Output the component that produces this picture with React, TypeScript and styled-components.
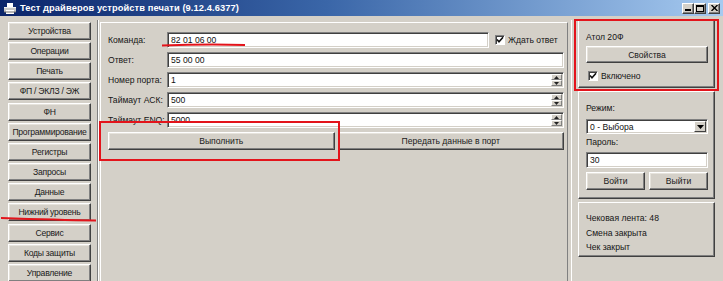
import React from "react";
import styled, { createGlobalStyle } from "styled-components";

const Global = createGlobalStyle`
  html, body { margin: 0; padding: 0; background: #d4d0c8; }
  body {
    font-family: "Liberation Sans", Arial, sans-serif;
    font-size: 8.6px;
    color: #151515;
  }
`;

const Window = styled.div`
  position: relative;
  width: 723px;
  height: 281px;
  overflow: hidden;
  display: flex;
  flex-direction: column;
  background: #d4d0c8;
`;

const TitleBar = styled.div`
  height: 16px;
  flex: none;
  display: flex;
  align-items: center;
  padding: 0 3px 0 3px;
  background: linear-gradient(90deg, #0a246a 0%, #3a66a8 45%, #a6caf0 100%);
`;

const TitleText = styled.div`
  margin-left: 3px;
  color: #fff;
  font-weight: bold;
  font-size: 9.3px;
  letter-spacing: 0.1px;
  flex: 1;
  white-space: nowrap;
`;

const WinButtons = styled.div`
  display: flex;
`;

const WinButton = styled.div<{ $gapLeft?: number }>`
  width: 12px;
  height: 11px;
  margin-left: ${(p) => p.$gapLeft ?? 0}px;
  box-sizing: border-box;
  background: #d4d0c8;
  border: 1px solid;
  border-color: #fff #404040 #404040 #fff;
  box-shadow: inset -1px -1px #808080;
  display: flex;
  align-items: center;
  justify-content: center;
`;

const Body = styled.div`
  flex: 1;
  display: flex;
  padding-top: 6px;
  min-height: 0;
`;

const LeftCol = styled.div`
  width: 83px;
  flex: none;
  padding-left: 8px;
  padding-right: 6px;
  display: flex;
  flex-direction: column;
  gap: 2.17px;
  letter-spacing: -0.25px;
`;

const Separator = styled.div`
  width: 1px;
  flex: none;
  background: #808080;
  border-right: 1px solid #fff;
  margin-right: 1px;
  margin-top: -2px;
`;

const RaisedButton = styled.div<{ $h?: number; $grow?: boolean }>`
  box-sizing: border-box;
  height: ${(p) => p.$h ?? 18}px;
  flex: ${(p) => (p.$grow ? "1 1 0" : "none")};
  display: flex;
  align-items: center;
  justify-content: center;
  background: #d4d0c8;
  border: 1px solid;
  border-color: #fff #404040 #404040 #fff;
  box-shadow: inset -1px -1px #808080, inset 1px 1px #e6e3dc;
  white-space: nowrap;
  overflow: hidden;
  color: #1a1a1a;
`;

const MiddlePanel = styled.div`
  width: 468px;
  flex: none;
  box-sizing: border-box;
  border: 1px solid;
  border-color: #fff #808080 #808080 #fff;
  border-bottom: none;
  padding: 9px 3px 0 7px;
  display: flex;
  flex-direction: column;
  gap: 4px;
`;

const Row = styled.div`
  height: 16px;
  display: flex;
  align-items: center;
`;

const FieldLabel = styled.div`
  width: 59px;
  flex: none;
  white-space: nowrap;
`;

const Field = styled.div<{ $h?: number }>`
  box-sizing: border-box;
  flex: 1;
  min-width: 0;
  height: ${(p) => p.$h ?? 16}px;
  background: #fff;
  border: 1px solid;
  border-color: #808080 #fff #fff #808080;
  box-shadow: inset 1px 1px #404040, inset -1px -1px #d4d0c8;
  display: flex;
  align-items: center;
  padding-left: 3px;
  white-space: nowrap;
  color: #111;
`;

const FieldText = styled.div`
  flex: 1;
`;

const Spinner = styled.div`
  width: 11px;
  height: 12px;
  margin-right: 1px;
  display: flex;
  flex-direction: column;
`;

const SpinHalf = styled.div`
  flex: 1;
  box-sizing: border-box;
  background: #d4d0c8;
  border: 1px solid;
  border-color: #fff #808080 #808080 #fff;
  display: flex;
  align-items: center;
  justify-content: center;
`;

const CheckWrap = styled.div`
  width: 75px;
  flex: none;
  box-sizing: border-box;
  padding-left: 6px;
  display: flex;
  align-items: center;
  gap: 3px;
  white-space: nowrap;
`;

const CheckBox = styled.div`
  width: 10px;
  height: 10px;
  box-sizing: border-box;
  flex: none;
  background: #fff;
  border: 1px solid;
  border-color: #808080 #fff #fff #808080;
  box-shadow: inset 1px 1px #404040;
  display: flex;
  align-items: center;
  justify-content: center;
`;

const ButtonRow = styled.div`
  display: flex;
  gap: 3px;
`;

const RightPanel = styled.div`
  flex: 1;
  box-sizing: border-box;
  margin-left: 3px;
  border-left: 1px solid #fff;
  padding: 0 8px 0 6px;
  margin-top: -2px;
  display: flex;
  flex-direction: column;
  gap: 3px;
`;

const Group = styled.div<{ $h: number; $pt: number }>`
  box-sizing: border-box;
  height: ${(p) => p.$h}px;
  flex: none;
  border: 1px solid;
  border-color: #fff #404040 #404040 #fff;
  box-shadow: inset -1px -1px #808080;
  padding: ${(p) => p.$pt}px 6px 0 7px;
  display: flex;
  flex-direction: column;
`;

const GroupText = styled.div<{ $mt?: number; $lh?: number }>`
  line-height: ${(p) => p.$lh ?? 12}px;
  margin-top: ${(p) => p.$mt ?? 0}px;
  white-space: nowrap;
`;

const Spaced = styled.div<{ $mt: number }>`
  margin-top: ${(p) => p.$mt}px;
  display: flex;
  gap: 4px;
`;

const CheckRow = styled.div`
  margin-top: 7px;
  height: 12px;
  display: flex;
  align-items: center;
  gap: 3px;
  padding-left: 2px;
`;

const DropButton = styled.div`
  width: 12px;
  height: 11px;
  box-sizing: border-box;
  margin-right: 1px;
  background: #d4d0c8;
  border: 1px solid;
  border-color: #fff #404040 #404040 #fff;
  display: flex;
  align-items: center;
  justify-content: center;
`;

const Overlay = styled.svg`
  position: absolute;
  left: 0;
  top: 0;
  pointer-events: none;
`;

const Tri = ({ up }: { up?: boolean }) => (
  <svg width="5" height="3" viewBox="0 0 5 3">
    <path d={up ? "M2.5 0 L5 3 L0 3Z" : "M0 0 L5 0 L2.5 3Z"} fill="#222" />
  </svg>
);

const Check = () => (
  <svg width="8" height="8" viewBox="0 0 8 8">
    <path d="M1 3.5 L3 5.8 L7 1.2" stroke="#111" strokeWidth="1.6" fill="none" />
  </svg>
);

const NumField = ({ value }: { value: string }) => (
  <Field>
    <FieldText>{value}</FieldText>
    <Spinner>
      <SpinHalf>
        <Tri up />
      </SpinHalf>
      <SpinHalf>
        <Tri />
      </SpinHalf>
    </Spinner>
  </Field>
);

const leftButtons = [
  "Устройства",
  "Операции",
  "Печать",
  "ФП / ЭКЛЗ / ЭЖ",
  "ФН",
  "Программирование",
  "Регистры",
  "Запросы",
  "Данные",
  "Нижний уровень",
  "Сервис",
  "Коды защиты",
  "Управление",
];

export default function App() {
  return (
    <>
      <Global />
      <Window>
        <TitleBar>
          <svg width="14" height="13" viewBox="0 0 14 13">
            <path d="M4 1 L10 1 L10 5 L4 5Z" fill="#fff" />
            <path d="M1 5 L13 5 L13 10 L1 10Z" fill="#c8c8c8" />
            <path d="M1 5 L13 5 L13 6 L1 6Z" fill="#f0f0f0" />
            <path d="M3 8 L11 8 L11 12 L3 12Z" fill="#fff" />
            <path d="M1 10 L13 10" stroke="#6b6b6b" strokeWidth="1" />
          </svg>
          <TitleText>Тест драйверов устройств печати (9.12.4.6377)</TitleText>
          <WinButtons>
            <WinButton>
              <svg width="6" height="6" viewBox="0 0 6 6">
                <rect x="0" y="4" width="6" height="2" fill="#000" />
              </svg>
            </WinButton>
            <WinButton>
              <svg width="8" height="7" viewBox="0 0 8 7">
                <rect x="0.5" y="0.5" width="7" height="6" fill="none" stroke="#000" />
                <rect x="0" y="0" width="8" height="2" fill="#000" />
              </svg>
            </WinButton>
            <WinButton $gapLeft={2}>
              <svg width="7" height="6" viewBox="0 0 7 6">
                <path d="M0.5 0 L6.5 6 M6.5 0 L0.5 6" stroke="#000" strokeWidth="1.4" />
              </svg>
            </WinButton>
          </WinButtons>
        </TitleBar>
        <Body>
          <LeftCol>
            {leftButtons.map((b) => (
              <RaisedButton key={b}>{b}</RaisedButton>
            ))}
          </LeftCol>
          <Separator />
          <MiddlePanel>
            <Row>
              <FieldLabel>Команда:</FieldLabel>
              <Field>82 01 06 00</Field>
              <CheckWrap>
                <CheckBox>
                  <Check />
                </CheckBox>
                Ждать ответ
              </CheckWrap>
            </Row>
            <Row>
              <FieldLabel>Ответ:</FieldLabel>
              <Field>55 00 00</Field>
            </Row>
            <Row>
              <FieldLabel>Номер порта:</FieldLabel>
              <NumField value="1" />
            </Row>
            <Row>
              <FieldLabel>Таймаут АСК:</FieldLabel>
              <NumField value="500" />
            </Row>
            <Row>
              <FieldLabel>Таймаут ENQ:</FieldLabel>
              <NumField value="5000" />
            </Row>
            <ButtonRow>
              <RaisedButton $grow>Выполнить</RaisedButton>
              <RaisedButton $grow>Передать данные в порт</RaisedButton>
            </ButtonRow>
          </MiddlePanel>
          <RightPanel>
            <Group $h={68} $pt={10}>
              <GroupText>Атол 20Ф</GroupText>
              <Spaced $mt={3}>
                <RaisedButton $h={17} $grow>
                  Свойства
                </RaisedButton>
              </Spaced>
              <CheckRow>
                <CheckBox>
                  <Check />
                </CheckBox>
                Включено
              </CheckRow>
            </Group>
            <Group $h={108} $pt={10}>
              <GroupText>Режим:</GroupText>
              <Spaced $mt={5}>
                <Field $h={15}>
                  <FieldText>0 - Выбора</FieldText>
                  <DropButton>
                    <svg width="7" height="4" viewBox="0 0 7 4">
                      <path d="M0 0 L7 0 L3.5 4Z" fill="#000" />
                    </svg>
                  </DropButton>
                </Field>
              </Spaced>
              <GroupText $mt={2}>Пароль:</GroupText>
              <Spaced $mt={4}>
                <Field>30</Field>
              </Spaced>
              <Spaced $mt={4}>
                <RaisedButton $grow>Войти</RaisedButton>
                <RaisedButton $grow>Выйти</RaisedButton>
              </Spaced>
            </Group>
            <Group $h={55} $pt={8}>
              <GroupText $lh={14.5}>Чековая лента: 48</GroupText>
              <GroupText $lh={14.5}>Смена закрыта</GroupText>
              <GroupText $lh={14.5}>Чек закрыт</GroupText>
            </Group>
          </RightPanel>
        </Body>
        <Overlay width="723" height="281" viewBox="0 0 723 281">
          <g stroke="#e3141b" strokeWidth="2" fill="none">
            <rect x="100" y="122" width="239" height="38" />
            <rect x="575" y="20" width="143" height="70" />
            <path d="M162 45.5 C190 44.5 220 44.3 245 45" />
            <path d="M1 218 C30 219 60 220 96 220.5" />
          </g>
        </Overlay>
      </Window>
    </>
  );
}
